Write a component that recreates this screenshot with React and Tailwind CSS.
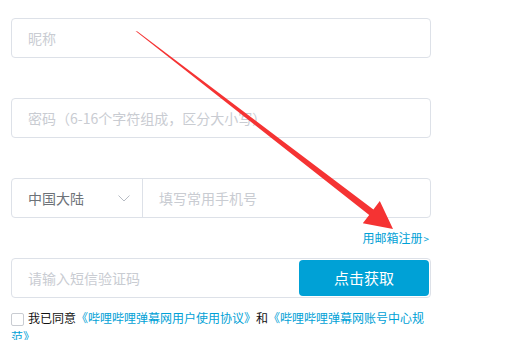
import React from 'react';

const font = { fontFamily: '"Noto Sans CJK SC", "Noto Sans", sans-serif' };

function Field({ children, className = '' }) {
  return (
    <div className={`h-10 w-[420px] rounded border border-[#dde1e8] bg-white flex items-center ${className}`}>
      {children}
    </div>
  );
}

function Arrow() {
  // tapered red arrow drawn over the form
  return (
    <svg className="absolute inset-0 pointer-events-none" width="510" height="340" viewBox="0 0 510 340">
      <polygon
        points="135.5,31 137.5,31.5 373.4,209.4 379.8,201.1 393,229 362.8,223.3 369.2,215"
        fill="#f53333"
      />
    </svg>
  );
}

export default function App() {
  return (
    <div className="relative w-[510px] h-[340px] overflow-hidden bg-white" style={font}>
      <div className="pl-[11px] pt-[18px] flex flex-col">
        <Field>
          <span className="pl-4 text-[14px] text-[#c9ccd2]">昵称</span>
        </Field>

        <Field className="mt-10">
          <span className="pl-4 text-[14px] text-[#c9ccd2]">密码（6-16个字符组成，区分大小写）</span>
        </Field>

        <Field className="mt-10">
          <div className="w-[131px] h-full flex items-center justify-between pl-4 pr-3 border-r border-[#dde1e8]">
            <span className="text-[14px] text-[#6d7278]">中国大陆</span>
            <svg width="12" height="7" viewBox="0 0 12 7" fill="none">
              <path d="M0.5 0.5 L6 6 L11.5 0.5" stroke="#b7bcc4" strokeWidth="1" />
            </svg>
          </div>
          <span className="pl-4 text-[14px] text-[#c9ccd2]">填写常用手机号</span>
        </Field>

        <div className="w-[420px] flex justify-end mt-3 h-4 items-center pr-[2px]">
          <span className="text-[12px] text-[#00a1d6] leading-4">
            用邮箱注册<span className="text-[10px] ml-[1px]">&gt;</span>
          </span>
        </div>

        <Field className="mt-3 justify-between">
          <span className="pl-4 text-[14px] text-[#c9ccd2]">请输入短信验证码</span>
          <button className="mr-[1px] w-[130px] h-9 rounded bg-[#00a1d6] text-white text-[15px]">
            点击获取
          </button>
        </Field>

        <p className="w-[420px] mt-[10px] text-[12px] leading-[19px] text-[#111]">
          <span className="inline-block align-[-3px] w-[13px] h-[13px] border border-[#c9ccd2] rounded-[2px] bg-white mr-1"></span>
          我已同意<span className="text-[#00a1d6]">《哔哩哔哩弹幕网用户使用协议》</span>和<span className="text-[#00a1d6]">《哔哩哔哩弹幕网账号中心规<br />范》</span>
        </p>
      </div>
      <Arrow />
    </div>
  );
}
